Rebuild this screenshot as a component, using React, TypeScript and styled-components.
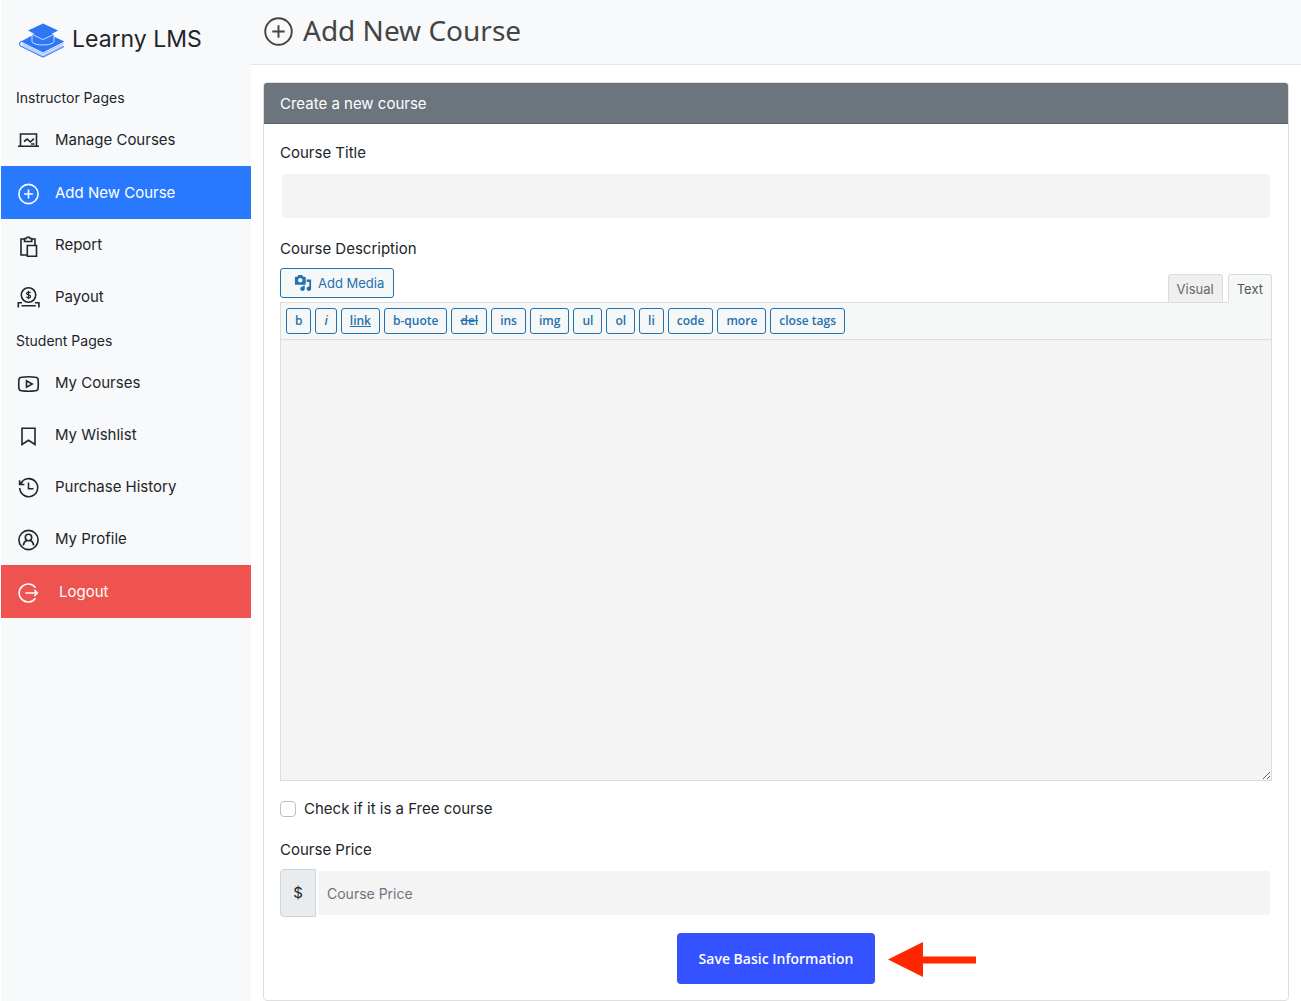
import React from "react";
import styled, { createGlobalStyle, css } from "styled-components";

const GlobalStyle = createGlobalStyle`
  *, *::before, *::after { box-sizing: border-box; }
  body {
    margin: 0;
    background: #fff;
    color: #212529;
    font: 400 15px/24px Inter, "Liberation Sans", sans-serif;
  }
  button, input, textarea { font-family: inherit; }
`;

const Page = styled.div`
  display: flex;
  min-height: 100vh;
  padding-left: 1px;
`;

const Sidebar = styled.aside`
  flex: 0 0 250px;
  background: #f8f9fb;
`;

const Brand = styled.a`
  display: flex;
  align-items: center;
  gap: 7px;
  height: 80px;
  padding: 0 18px 2px;
  color: #212529;
  font-size: 23px;
  line-height: 32px;
  text-decoration: none;
`;

const GroupTitle = styled.h2`
  margin: 0;
  padding: 6px 15px 4px;
  font-size: 14px;
  font-weight: 400;
  line-height: 24px;
`;

const MenuList = styled.ul`
  margin: 0;
  padding: 0;
  list-style: none;
`;

type Tone = "plain" | "active" | "danger";

const MenuLink = styled.a<{ $tone: Tone }>`
  display: flex;
  align-items: center;
  gap: 14px;
  height: 52px;
  padding: 2px 16px 0;
  color: #212529;
  text-decoration: none;

  ${({ $tone }) =>
    $tone !== "plain" &&
    css`
      height: 53px;
      color: #fff;
      background: ${$tone === "active" ? "#2979ff" : "#ef5350"};
    `}
`;

const MenuText = styled.span<{ $indent?: boolean }>`
  padding: 0 0 2px ${({ $indent }) => ($indent ? "4px" : "0")};
`;

const Main = styled.main`
  flex: 1;
  min-width: 0;
`;

const TopBar = styled.header`
  display: flex;
  align-items: center;
  gap: 10px;
  height: 65px;
  padding: 0 13px 2px;
  border-bottom: 1px solid #e4e7ea;
  background: #f8f9fb;
  color: #444;
`;

const PageTitle = styled.h1`
  margin: 0;
  padding-bottom: 2px;
  font: 400 28px/40px "Noto Sans", sans-serif;
`;

const Card = styled.section`
  margin: 17px 12px 0;
  border: 1px solid #dfdfdf;
  border-radius: 4px;
  overflow: hidden;
`;

const CardHeader = styled.h2`
  margin: 0;
  padding: 8px 16px 6px;
  border-bottom: 1px solid #5e646d;
  background: #6c757d;
  color: #fff;
  font-size: 15px;
  font-weight: 400;
  line-height: 26px;
`;

const CardBody = styled.form`
  display: flex;
  flex-direction: column;
  gap: 16px;
  padding: 16px;
`;

const Field = styled.div`
  display: flex;
  flex-direction: column;
  gap: 6px;
`;

const Label = styled.label`
  line-height: 26px;
`;

const TextInput = styled.input`
  width: 100%;
  min-width: 0;
  height: 48px;
  padding: 0 9px;
  border: 2px solid #fff;
  border-radius: 4px;
  background: #f4f4f4;
  color: #212529;
  font-size: 14px;

  &::placeholder { color: #6c757d; opacity: 1; }
`;

const EditorTop = styled.div`
  display: flex;
  align-items: flex-start;
  justify-content: space-between;
  height: 34px;
`;

const MediaButton = styled.button`
  display: flex;
  align-items: center;
  gap: 6px;
  height: 30px;
  padding: 0 9px 0 13px;
  border: 1px solid #2271b1;
  border-radius: 3px;
  background: #f6f7f7;
  color: #2271b1;
  font-size: 13px;
`;

const Tabs = styled.div`
  display: flex;
  gap: 5px;
  padding-top: 6px;
`;

const Tab = styled.button<{ $current?: boolean }>`
  height: 29px;
  padding: 0 8px;
  border: 1px solid #dcdcde;
  border-bottom-color: ${({ $current }) => ($current ? "#f6f7f7" : "#dcdcde")};
  border-radius: 3px 3px 0 0;
  background: ${({ $current }) => ($current ? "#f6f7f7" : "#efefef")};
  color: ${({ $current }) => ($current ? "#50575e" : "#646970")};
  font-size: 13px;
  z-index: 1;
`;

const Editor = styled.div`
  border: 1px solid #dcdcde;
`;

const Toolbar = styled.div`
  display: flex;
  flex-wrap: wrap;
  gap: 4px;
  padding: 5px;
  border-bottom: 1px solid #dcdcde;
  background: #f6f7f7;
`;

type Mark = "italic" | "underline" | "strike";

const ToolButton = styled.button<{ $mark?: Mark }>`
  height: 26px;
  padding: 0 8px;
  border: 1px solid #2271b1;
  border-radius: 3px;
  background: #f6f7f7;
  color: #2271b1;
  font: ${({ $mark }) => ($mark === "italic" ? "italic" : "normal")} 600 12px/24px "Open Sans", "Noto Sans", sans-serif;
  text-decoration: ${({ $mark }) =>
    $mark === "underline" ? "underline" : $mark === "strike" ? "line-through" : "none"};
`;

const EditorArea = styled.textarea`
  display: block;
  width: 100%;
  height: 440px;
  padding: 10px;
  border: 0;
  background: #f4f4f4;
  font-size: 14px;
  resize: vertical;
`;

const CheckRow = styled.label`
  display: flex;
  align-items: center;
  gap: 8px;
`;

const CheckBox = styled.input`
  appearance: none;
  width: 16px;
  height: 16px;
  margin: 0;
  border: 1px solid #bfbfbf;
  border-radius: 4px;
  background: #fff;

  &:checked { background: #2979ff; }
`;

const InputGroup = styled.div`
  display: flex;
`;

const Prefix = styled.span`
  display: flex;
  align-items: center;
  justify-content: center;
  flex: 0 0 36px;
  border: 1px solid #ced4da;
  border-radius: 4px 0 0 4px;
  background: #e9ecef;
`;

const Actions = styled.div`
  display: flex;
  justify-content: center;
`;

const SaveWrap = styled.div`
  position: relative;
`;

const SaveButton = styled.button`
  display: block;
  height: 51px;
  padding: 0 22px;
  border: 0;
  border-radius: 4px;
  background: #3452ff;
  color: #fff;
  font: 600 14px/24px "Open Sans", "Noto Sans", sans-serif;
`;

const Pointer = styled.svg`
  position: absolute;
  top: 9px;
  left: calc(100% + 13px);
`;

const icons = {
  manage: (
    <>
      <path d="M3.5 17V5h16v12M1 17.3h21" />
      <path d="M7 12.500l3.300-2.500 3 3 3.700-3.400M14 15h3.500" />
    </>
  ),
  add: (
    <>
      <circle cx="11.500" cy="12" r="9.600" />
      <path d="M11.500 7.500v9M7 12h9" />
    </>
  ),
  report: (
    <>
      <path d="M7.500 5H4v16h6M14.500 5H18v6" />
      <path d="M7.500 4.500h2c0-2 3.500-2 3.500 0h1.800v3H7.500z" />
      <path d="M10.300 11.500h9.200v10.700h-9.200z" />
    </>
  ),
  payout: (
    <>
      <circle cx="11.500" cy="9" r="7.200" />
      <path d="M13.500 7c-.3-1.200-3.800-1.400-3.900.5 0 1.900 4 .9 4 2.900 0 1.900-3.800 1.700-4.200.3M11.500 4.700v8.600" strokeWidth="1.200" />
      <path d="M5 16.800H1.300v4.800M18 16.800h3.900v4.800M4.500 19.700h14.300" />
    </>
  ),
  courses: (
    <>
      <path d="M4.500 5.300q7-1 14 0 2.500.3 2.600 2.500.4 4.200 0 8.400-.1 2.200-2.600 2.500-7 1-14 0-2.500-.3-2.600-2.500-.4-4.200 0-8.400.1-2.200 2.600-2.500z" />
      <path d="M9.500 8.800v6.400l5.700-3.200z" />
    </>
  ),
  wishlist: <path d="M5 4.200h13v16.300l-6.500-4.200L5 20.500z" />,
  history: (
    <>
      <path d="M3.700 7.500a9 9 0 1 1-1 4.500M2.600 4.300v4.200h4.800M2.600 8.500L5.500 5.800" />
      <path d="M11.500 6.500v6.200h5" />
    </>
  ),
  profile: (
    <>
      <circle cx="11.500" cy="12" r="9.600" />
      <circle cx="11.500" cy="9.500" r="3.200" />
      <path d="M6.300 17.500c.3-3 2-4.500 3.700-5.200M16.700 17.500c-.3-3-2-4.500-3.700-5.200" />
    </>
  ),
  logout: (
    <>
      <path d="M18.500 6.800a9 9 0 1 0 0 10.400" />
      <path d="M8.300 12h12M17.300 9l3 3-3 3" />
    </>
  ),
};

type IconName = keyof typeof icons;

function Icon({ name, size = 24, box = "0 0 24 24", weight = 1.6 }: { name: IconName; size?: number; box?: string; weight?: number }) {
  return (
    <svg width={size} height={size} viewBox={box} fill="none" stroke="currentColor" strokeWidth={weight} aria-hidden="true">
      {icons[name]}
    </svg>
  );
}

function Logo() {
  return (
    <svg width="46" height="42" viewBox="0 -5 46 42" aria-hidden="true">
      <path d="M12 13L2 18.500 24 29.500 45.500 18.500 34.500 13.500z" fill="#2f76f6" />
      <path d="M3 18c-2.800 1.200-3.200 4-1 5.200L24 34l21-10.500" fill="none" stroke="#3f80f7" strokeWidth="1.200" />
      <path d="M3.500 20.500L24 30.800l20.500-10.300M3.500 22.200L24 32.500l20-10" fill="none" stroke="#8db3fb" strokeWidth=".9" />
      <path d="M13 11v8c3 4 19 4 22 0v-8z" fill="#2f76f6" />
      <path d="M13 11.500v7.500c3 4 19 4 22 0v-7.500M24 16.600l-11-5.300M24 16.600l11-5.300" fill="none" stroke="#dce8fe" strokeWidth=".9" />
      <path d="M24 .500l15 7L24 15.500 9 7.500z" fill="#2f76f6" />
    </svg>
  );
}

function MediaIcon() {
  return (
    <svg width="18" height="18" viewBox="0 0 20 20" fill="currentColor" aria-hidden="true">
      <path d="M13 11V4c0-.55-.45-1-1-1h-1.670L9 1H5L3.670 3H2c-.55 0-1 .45-1 1v7c0 .55.45 1 1 1h10c.55 0 1-.45 1-1zM7 4.500c1.380 0 2.500 1.120 2.500 2.500S8.380 9.500 7 9.500 4.500 8.380 4.500 7 5.620 4.500 7 4.500zM14 6h5v10.500c0 1.380-1.120 2.500-2.500 2.500S14 17.880 14 16.500s1.120-2.500 2.500-2.500c.17 0 .34.02.5.05V9h-3V6zM10 14.050V13h2v3.500c0 1.380-1.120 2.500-2.500 2.500S7 17.880 7 16.500 8.120 14 9.500 14c.17 0 .34.02.5.05z" />
    </svg>
  );
}

type Item = { icon: IconName; text: string; tone?: Tone };

const groups: { title: string; items: Item[] }[] = [
  {
    title: "Instructor Pages",
    items: [
      { icon: "manage", text: "Manage Courses" },
      { icon: "add", text: "Add New Course", tone: "active" },
      { icon: "report", text: "Report" },
      { icon: "payout", text: "Payout" },
    ],
  },
  {
    title: "Student Pages",
    items: [
      { icon: "courses", text: "My Courses" },
      { icon: "wishlist", text: "My Wishlist" },
      { icon: "history", text: "Purchase History" },
      { icon: "profile", text: "My Profile" },
      { icon: "logout", text: "Logout", tone: "danger" },
    ],
  },
];

const tools: { text: string; mark?: Mark }[] = [
  { text: "b" },
  { text: "i", mark: "italic" },
  { text: "link", mark: "underline" },
  { text: "b-quote" },
  { text: "del", mark: "strike" },
  { text: "ins" },
  { text: "img" },
  { text: "ul" },
  { text: "ol" },
  { text: "li" },
  { text: "code" },
  { text: "more" },
  { text: "close tags" },
];

export default function App() {
  return (
    <Page>
      <GlobalStyle />
      <Sidebar>
        <Brand href="#">
          <Logo />
          Learny LMS
        </Brand>
        <nav>
          {groups.map((group) => (
            <React.Fragment key={group.title}>
              <GroupTitle>{group.title}</GroupTitle>
              <MenuList>
                {group.items.map(({ icon, text, tone = "plain" }) => (
                  <li key={text}>
                    <MenuLink href="#" $tone={tone}>
                      <Icon name={icon} />
                      <MenuText $indent={tone === "danger"}>{text}</MenuText>
                    </MenuLink>
                  </li>
                ))}
              </MenuList>
            </React.Fragment>
          ))}
        </nav>
      </Sidebar>
      <Main>
        <TopBar>
          <Icon name="add" size={29} box="1 1.500 21 21" weight={1.4} />
          <PageTitle>Add New Course</PageTitle>
        </TopBar>
        <Card>
          <CardHeader>Create a new course</CardHeader>
          <CardBody onSubmit={(e) => e.preventDefault()}>
            <Field>
              <Label htmlFor="course-title">Course Title</Label>
              <TextInput id="course-title" type="text" />
            </Field>
            <Field>
              <Label htmlFor="course-description">Course Description</Label>
              <div>
                <EditorTop>
                  <MediaButton type="button">
                    <MediaIcon />
                    Add Media
                  </MediaButton>
                  <Tabs>
                    <Tab type="button">Visual</Tab>
                    <Tab type="button" $current>Text</Tab>
                  </Tabs>
                </EditorTop>
                <Editor>
                  <Toolbar>
                    {tools.map(({ text, mark }) => (
                      <ToolButton key={text} type="button" $mark={mark}>{text}</ToolButton>
                    ))}
                  </Toolbar>
                  <EditorArea id="course-description" />
                </Editor>
              </div>
            </Field>
            <CheckRow>
              <CheckBox type="checkbox" />
              Check if it is a Free course
            </CheckRow>
            <Field>
              <Label htmlFor="course-price">Course Price</Label>
              <InputGroup>
                <Prefix>$</Prefix>
                <TextInput id="course-price" type="text" placeholder="Course Price" />
              </InputGroup>
            </Field>
            <Actions>
              <SaveWrap>
                <SaveButton type="submit">Save Basic Information</SaveButton>
                <Pointer width="88" height="36" viewBox="0 0 88 36" aria-hidden="true">
                  <path d="M0 17.500L35 0v14.500h53v7H35V35z" fill="#ff2600" />
                </Pointer>
              </SaveWrap>
            </Actions>
          </CardBody>
        </Card>
      </Main>
    </Page>
  );
}
